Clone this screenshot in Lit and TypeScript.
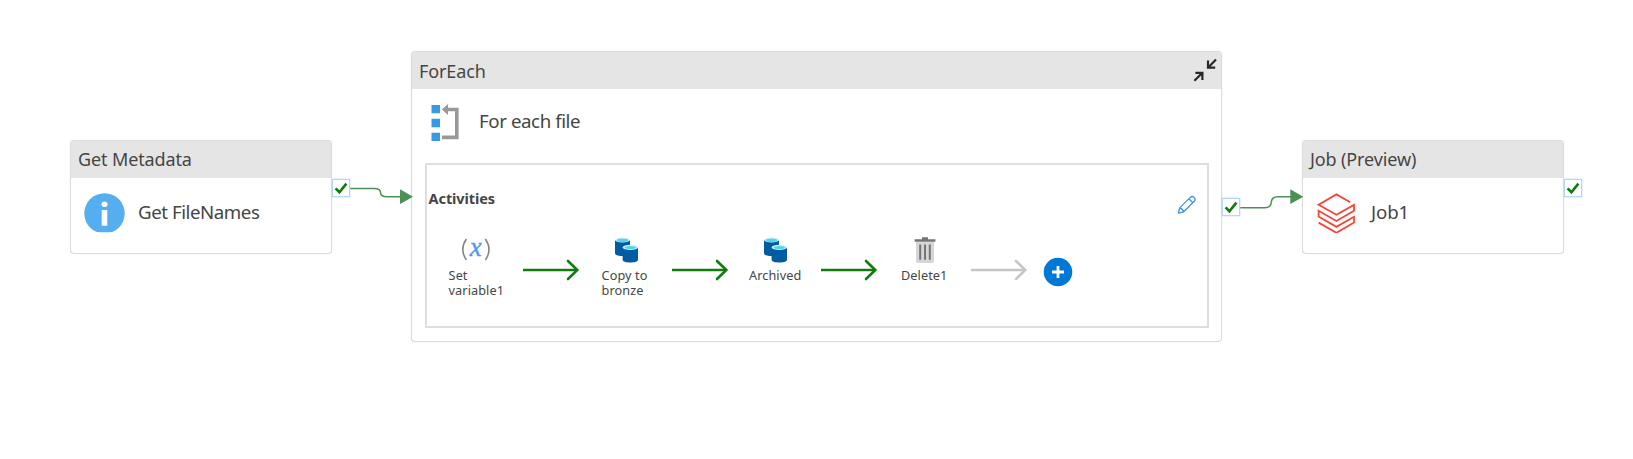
import { LitElement, html, svg, css } from "lit";
import { customElement, property } from "lit/decorators.js";

const checkMark = svg`<path d="M3.6 9.4 L7.4 13.2 L14.4 4.6" fill="none" stroke="#107c10" stroke-width="2.6"/>`;

@customElement("success-port")
class SuccessPort extends LitElement {
  static styles = css`
    :host { display: block; width: 18px; height: 18px; box-sizing: border-box; background: #fff;
      border: 1px solid #b4d6f7; box-shadow: 0 0 2px #b4d6f7; }
    svg { display: block; margin: -1px; }
  `;
  render() {
    return html`<svg width="18" height="18" viewBox="0 0 18 18">${checkMark}</svg>`;
  }
}

@customElement("activity-card")
class ActivityCard extends LitElement {
  @property() kind = "";
  static styles = css`
    :host { display: flex; flex-direction: column; box-sizing: border-box; background: #fff;
      border: 1.5px solid #dcdcdc; border-radius: 4px; overflow: hidden;
      box-shadow: 0 0 1px #d8d8d8; }
    .head { display: flex; justify-content: space-between; height: 37px; flex: none; box-sizing: border-box;
      padding: 0 4px 0 7px; background: #e5e5e5; font-size: 18px; line-height: var(--head-line, 37px); color: #454545; letter-spacing: -.12px; }
  `;
  render() {
    return html`<div class="head"><span>${this.kind}</span><slot name="tool"></slot></div><slot></slot>`;
  }
}

const copyIcon = svg`
  <g>
    <path d="M0 3.2 V16 C0 18.2 3.5 19 7.5 19 S15 18.2 15 16 V3.2Z" fill="#005ba1"/>
    <ellipse cx="7.5" cy="3" rx="7.4" ry="2.5" fill="#d5edf7"/>
    <ellipse cx="7.5" cy="3.2" rx="5.8" ry="1.7" fill="#50d5ee"/>
    <path d="M7.6 10.6 V22.6 C7.6 24.8 11 25.6 15.3 25.6 S23 24.8 23 22.6 V10.6Z" fill="#005ba1"/>
    <ellipse cx="15.3" cy="10.4" rx="7.6" ry="2.6" fill="#d5edf7"/>
    <ellipse cx="15.3" cy="10.6" rx="5.8" ry="1.7" fill="#50d5ee"/>
  </g>`;

const icons: Record<string, unknown> = {
  variable: html`<svg width="30" height="26" viewBox="0 0 30 26">
    <g fill="none" stroke="#858585" stroke-width="1.6"><path d="M5.4 2 Q-1.8 12.5 5.4 23"/><path d="M24.4 2 Q31.6 12.5 24.4 23"/></g>
    <text class="var" x="14.9" y="19" text-anchor="middle">x</text></svg>`,
  copy: html`<svg width="24" height="26" viewBox="0 0 24 26">${copyIcon}</svg>`,
  trash: html`<svg width="22" height="26" viewBox="0 0 22 26">
    <path d="M2 5 H20 V24 Q20 26 18 26 H4 Q2 26 2 24Z" fill="#d6d6d6"/>
    <path d="M.6 2.2 H21.4 V4.8 H.6Z M8 .2 H14 V2.6 H8Z" fill="#757575"/>
    <path d="M6.2 7.6 V22.8 M11 7.6 V22.8 M15.8 7.6 V22.8" stroke="#757575" stroke-width="2"/></svg>`,
};

const steps = [
  { icon: "variable", name: "set", lines: ["Set", "variable1"], done: true },
  { icon: "copy", name: "copy", lines: ["Copy to", "bronze"], done: true },
  { icon: "copy", name: "archive", lines: ["Archived"], done: true },
  { icon: "trash", name: "delete", lines: ["Delete1"], done: false },
];

@customElement("app-root")
class AppRoot extends LitElement {
  static styles = css`
    :host { display: block; position: relative; width: 1633px; height: 459px; background: #fff; overflow: hidden;
      font-family: "Noto Sans", "Open Sans", sans-serif; color: #454545; }
    svg { display: block; flex: none; }
    .node, .port, .wires { position: absolute; }
    .meta { left: 70px; top: 140px; width: 262px; height: 114px; }
    .loop { left: 411px; top: 51px; width: 811px; height: 291px; --head-line: 39px; }
    .job { left: 1302px; top: 140px; width: 262px; height: 114px; }
    .port-a { left: 332px; top: 179px; }
    .port-b { left: 1222px; top: 198px; }
    .port-c { left: 1564px; top: 179px; }
    .wires { left: 0; top: 0; }
    .body { display: flex; align-items: flex-start; gap: 13px; padding: 15px 0 0 13px; height: 41px; font-size: 18.7px; line-height: 38px; letter-spacing: -.45px; }
    .job .body { padding-left: 13px; gap: 15px; letter-spacing: -.1px; }
    .loop-body { display: flex; gap: 20px; padding: 14px 0 0 19px; height: 42px; font-size: 18.7px; line-height: 35px; letter-spacing: -.42px; }
    .activities { margin: 18px 12px 0 12.6px; height: 165px; box-sizing: border-box; border: 2px solid #dedede; }
    .bar { display: flex; justify-content: space-between; padding: 23px 10px 0 2px; height: 49px;
      font-size: 14.5px; font-weight: 700; line-height: 20px; letter-spacing: -.1px; }
    .pencil { margin-top: 7px; }
    .collapse { margin-top: 6px; }
    .steps { display: flex; align-items: flex-start; padding-left: 22px; letter-spacing: .08px; }
    .step { width: 93.4px; box-sizing: border-box; font-size: 12.7px; line-height: 15.7px; }
    .set { width: 74px; }
    .set svg { margin-left: 12px; }
    .set .label { line-height: 15px; }
    .copy { padding-left: 23px; } .copy svg { margin-left: 13.5px; }
    .archive { padding-left: 21px; } .archive svg { margin-left: 15.5px; }
    .delete { padding-left: 23.6px; } .delete svg { margin-left: 13.5px; }
    .label { padding-top: 4.5px; white-space: nowrap; }
    .arrow { margin-top: 22px; }
    .add { margin: 19.5px 0 0 16px; }
    .var { font: italic 27px "Liberation Serif", serif; fill: #4f9bf0; stroke: #4f9bf0; stroke-width: .4; }
    .var, .steps svg { overflow: visible; }
  `;

  arrow(done: boolean) {
    return html`<svg class="arrow" width="56" height="22" viewBox="0 0 56 22" fill="none"
      stroke=${done ? "#107c10" : "#c8c6c4"} stroke-width="2.6">
      <path d="M0 11 H54"/><path d="M45 2 L54.3 11 L45 20" stroke-linecap="round"/></svg>`;
  }

  render() {
    return html`
      <activity-card class="node meta" kind="Get Metadata">
        <div class="body">
          <svg width="41" height="40" viewBox="0 0 41 40">
            <clipPath id="cut"><path d="M0 0H41V39.3H0Z"/></clipPath>
            <circle cx="20.5" cy="20.4" r="20.2" fill="#55aeef" clip-path="url(#cut)"/>
            <ellipse cx="20.5" cy="11.3" rx="3" ry="2.8" fill="#fff"/><path d="M17.7 17H23.3V32.8H17.7Z" fill="#fff"/>
          </svg>
          <span>Get FileNames</span>
        </div>
      </activity-card>

      <activity-card class="node loop" kind="ForEach">
        <svg class="collapse" slot="tool" width="24" height="25" viewBox="0 0 24 25" fill="none" stroke="#292827" stroke-width="2.2">
          <path d="M23 1.5 L15.2 9.4 M15 2.6 V9.6 H22.2 M1.4 22.8 L9.2 15 M2.4 14.8 H9.4 V22"/>
        </svg>
        <div class="loop-body">
          <svg width="28" height="40" viewBox="0 0 28 40">
            <path d="M.5 2H9V10.3H.5Z M.5 15.8H9V24.2H.5Z M.5 29.8H9V38.1H.5Z" fill="#379ae8"/>
            <path d="M15 6.5 H25.8 V34.4 H11" fill="none" stroke="#999" stroke-width="3.6"/>
            <path d="M10.8 6.4 L17 1 V12Z" fill="#999"/>
          </svg>
          <span>For each file</span>
        </div>
        <div class="activities">
          <div class="bar"><span>Activities</span>
            <svg class="pencil" width="20" height="20" viewBox="0 0 20 20" fill="none" stroke="#3f95df" stroke-width="1.3" stroke-linejoin="round">
              <path d="M1.4 18.2 L2.7 12.9 L13.3 2.4 Q15.3 .6 17.2 2.4 Q19 4.4 17.2 6.3 L6.7 16.8Z M2.7 12.9 Q5.7 13.6 6.7 16.8 M11.9 3.8 L15.8 7.7"/>
            </svg>
          </div>
          <div class="steps">
            ${steps.map((s) => html`
              <div class="step ${s.name}">${icons[s.icon]}
                <div class="label">${s.lines.map((l) => html`<div>${l}</div>`)}</div>
              </div>${this.arrow(s.done)}`)}
            <svg class="add" width="30" height="30" viewBox="0 0 30 30">
              <circle cx="15" cy="15" r="14.3" fill="#0078d7"/>
              <path d="M9 15H21M15 9V21" stroke="#fff" stroke-width="2.8"/>
            </svg>
          </div>
        </div>
      </activity-card>

      <activity-card class="node job" kind="Job (Preview)">
        <div class="body">
          <svg width="40" height="40" viewBox="0 0 40 40" fill="none" stroke="#f8473a" stroke-width="1.8">
            <path d="M34.2 9.2 L20.4 1.4 L2.6 11.7 L20.4 21.8 L38 11.9 V17.7 L20.4 28 L2.6 17.7 V23.6 L20.4 33.9 L38 23.8 V29.6 L20.4 39.8 L2.6 29.6"/>
          </svg>
          <span>Job1</span>
        </div>
      </activity-card>

      <svg class="wires" width="1633" height="459" viewBox="0 0 1633 459">
        <g fill="none" stroke="#4a9153" stroke-width="1.5">
          <path d="M350 188.4 H374 Q380.5 188.4 380.5 192.5 T387 196.8 H401"/>
          <path d="M1239 207.7 H1265 Q1271 207.7 1271.3 202.2 T1278 196.8 H1291"/>
        </g>
        <path d="M400 189.3 L413 196.8 L400 204Z M1290.3 189.3 L1303.3 196.8 L1290.3 204Z" fill="#4a9153"/>
      </svg>
      <success-port class="port port-a"></success-port>
      <success-port class="port port-b"></success-port>
      <success-port class="port port-c"></success-port>
    `;
  }
}
